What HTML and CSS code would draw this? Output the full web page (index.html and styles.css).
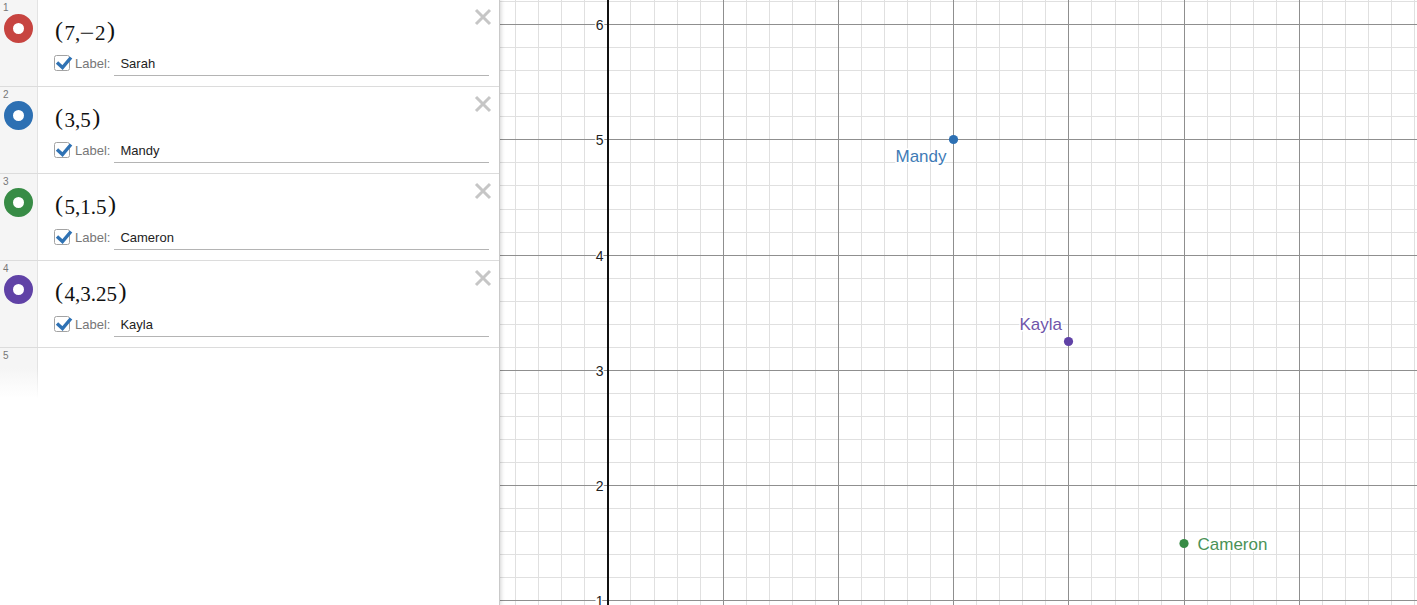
FILE: index.html
```html
<!DOCTYPE html>
<html>
<head>
<meta charset="utf-8">
<title>Graph</title>
<link rel="stylesheet" href="styles.css">
</head>
<body>
<div class="panel">
  <div class="expr">
    <div class="gutter"><span class="num">1</span><span class="dot red"></span></div>
    <div class="body">
      <div class="math"><span class="p l">(</span>7,<span class="m">−</span>2<span class="p r">)</span></div>
      <svg class="close" viewBox="0 0 18 18"><path d="M2 2L16 16M16 2L2 16"/></svg>
      <div class="label-row">
        <svg class="cb" viewBox="0 0 16 16"><rect x="0.5" y="0.5" width="15" height="15" rx="2"/><path d="M3 7.5L8.5 12.5L17 2.5"/></svg>
        <span class="lbl">Label:</span>
        <span class="inp">Sarah</span>
      </div>
    </div>
  </div>
  <div class="expr">
    <div class="gutter"><span class="num">2</span><span class="dot blue"></span></div>
    <div class="body">
      <div class="math"><span class="p l">(</span>3,5<span class="p r">)</span></div>
      <svg class="close" viewBox="0 0 18 18"><path d="M2 2L16 16M16 2L2 16"/></svg>
      <div class="label-row">
        <svg class="cb" viewBox="0 0 16 16"><rect x="0.5" y="0.5" width="15" height="15" rx="2"/><path d="M3 7.5L8.5 12.5L17 2.5"/></svg>
        <span class="lbl">Label:</span>
        <span class="inp">Mandy</span>
      </div>
    </div>
  </div>
  <div class="expr">
    <div class="gutter"><span class="num">3</span><span class="dot green"></span></div>
    <div class="body">
      <div class="math"><span class="p l">(</span>5,1.5<span class="p r">)</span></div>
      <svg class="close" viewBox="0 0 18 18"><path d="M2 2L16 16M16 2L2 16"/></svg>
      <div class="label-row">
        <svg class="cb" viewBox="0 0 16 16"><rect x="0.5" y="0.5" width="15" height="15" rx="2"/><path d="M3 7.5L8.5 12.5L17 2.5"/></svg>
        <span class="lbl">Label:</span>
        <span class="inp">Cameron</span>
      </div>
    </div>
  </div>
  <div class="expr">
    <div class="gutter"><span class="num">4</span><span class="dot purple"></span></div>
    <div class="body">
      <div class="math"><span class="p l">(</span>4,3.25<span class="p r">)</span></div>
      <svg class="close" viewBox="0 0 18 18"><path d="M2 2L16 16M16 2L2 16"/></svg>
      <div class="label-row">
        <svg class="cb" viewBox="0 0 16 16"><rect x="0.5" y="0.5" width="15" height="15" rx="2"/><path d="M3 7.5L8.5 12.5L17 2.5"/></svg>
        <span class="lbl">Label:</span>
        <span class="inp">Kayla</span>
      </div>
    </div>
  </div>
  <div class="expr empty">
    <div class="gutter"><span class="num">5</span></div>
    <div class="body"></div>
  </div>
</div>
<div class="graph">
  <svg class="plane" width="917" height="605" viewBox="500 0 917 605">
    <path class="minor" d="M515.5 0V605M538.5 0V605M561.5 0V605M584.5 0V605M630.5 0V605M654.5 0V605M677.5 0V605M700.5 0V605M746.5 0V605M769.5 0V605M792.5 0V605M815.5 0V605M861.5 0V605M884.5 0V605M907.5 0V605M930.5 0V605M976.5 0V605M999.5 0V605M1022.5 0V605M1045.5 0V605M1091.5 0V605M1115.5 0V605M1138.5 0V605M1161.5 0V605M1207.5 0V605M1230.5 0V605M1253.5 0V605M1276.5 0V605M1322.5 0V605M1345.5 0V605M1368.5 0V605M1391.5 0V605M1414.5 0V605M500 1.5H1417M500 47.5H1417M500 70.5H1417M500 93.5H1417M500 116.5H1417M500 162.5H1417M500 185.5H1417M500 209.5H1417M500 232.5H1417M500 278.5H1417M500 301.5H1417M500 324.5H1417M500 347.5H1417M500 393.5H1417M500 416.5H1417M500 439.5H1417M500 462.5H1417M500 508.5H1417M500 531.5H1417M500 554.5H1417M500 577.5H1417"/>
    <path class="major" d="M723.5 0V605M838.5 0V605M953.5 0V605M1068.5 0V605M1184.5 0V605M1299.5 0V605M500 24.5H1417M500 139.5H1417M500 255.5H1417M500 370.5H1417M500 485.5H1417M500 600.5H1417"/>
    <path class="axis" d="M608 0V605"/>
    <g class="ticks">
      <text x="603.5" y="29.5">6</text>
      <text x="603.5" y="144.5">5</text>
      <text x="603.5" y="260.5">4</text>
      <text x="603.5" y="375.5">3</text>
      <text x="603.5" y="490.5">2</text>
      <text x="603.5" y="605.5">1</text>
    </g>
    <circle class="pt-blue" cx="953.5" cy="139.5" r="4.6"/>
    <circle class="pt-purple" cx="1068.5" cy="341.5" r="4.6"/>
    <circle class="pt-green" cx="1184" cy="543.5" r="4.6"/>
    <text class="plabel lb-blue" x="946.5" y="162" text-anchor="end">Mandy</text>
    <text class="plabel lb-purple" x="1062" y="330" text-anchor="end">Kayla</text>
    <text class="plabel lb-green" x="1197.5" y="549.5">Cameron</text>
  </svg>
</div>
</body>
</html>
```
FILE: styles.css
```css
* { box-sizing: border-box; }
html, body { margin: 0; }
body {
  display: flex;
  height: 605px;
  overflow: hidden;
  background: #fff;
  font-family: "Liberation Sans", Arial, sans-serif;
}
.panel {
  width: 500px;
  flex: none;
  background: #fff;
  border-right: 1px solid #c9c9c9;
  box-shadow: 1px 0 4px rgba(0, 0, 0, 0.18);
  position: relative;
  z-index: 2;
}
.expr {
  display: flex;
  height: 87px;
  border-bottom: 1px solid #dcdcdc;
}
.gutter {
  width: 38px;
  flex: none;
  background: #f5f5f5;
  border-right: 1px solid #e3e3e3;
  padding-top: 2px;
}
.num {
  display: block;
  margin-left: 3px;
  font-size: 10px;
  line-height: 11px;
  color: #777;
}
.dot {
  display: block;
  width: 29px;
  height: 29px;
  margin: 1px 0 0 4px;
  border-radius: 50%;
  border: 9.5px solid;
  background: #fff;
}
.dot.red { border-color: #c74440; }
.dot.blue { border-color: #2d70b3; }
.dot.green { border-color: #388c46; }
.dot.purple { border-color: #6042a6; }
.body {
  flex: 1;
  display: grid;
  grid-template-columns: 1fr 20px;
  grid-template-rows: 26px auto;
  align-content: start;
  padding: 17px 10px 0 17px;
}
.math {
  font-family: "Liberation Serif", "Times New Roman", serif;
  font-size: 21px;
  line-height: 26px;
  height: 26px;
  color: #111;
  white-space: nowrap;
}
.p { font-size: 24px; vertical-align: 2px; }
.p.l { margin-right: 1.5px; }
.p.r { margin-left: 1.5px; }
.m {
  display: inline-block;
  margin: 0 2px 0 1px;
  transform: scaleX(1.25);
}
.close {
  display: block;
  width: 18px;
  height: 18px;
  justify-self: end;
  align-self: start;
  margin: -9px -3px 0 0;
}
.close path { stroke: #c6c6c6; stroke-width: 3; fill: none; }
.label-row {
  grid-column: 1 / -1;
  display: flex;
  align-items: flex-start;
  margin-top: 12px;
}
.cb {
  width: 16px;
  height: 16px;
  flex: none;
  margin-left: -1px;
  overflow: visible;
}
.cb rect { fill: #fff; stroke: #a3a3a3; stroke-width: 1; }
.cb path { fill: none; stroke: #2f72b4; stroke-width: 3.4; }
.lbl {
  margin: 1px 0 0 5px;
  font-size: 13px;
  line-height: 16px;
  color: #777;
}
.inp {
  flex: 1;
  margin-left: 4px;
  height: 21px;
  padding: 1px 0 0 6px;
  font-size: 13px;
  line-height: 16px;
  color: #222;
  border-bottom: 1px solid #b4b4b4;
}
.expr.empty {
  height: 50px;
  border-bottom: none;
}
.expr.empty .gutter {
  background: linear-gradient(#f5f5f5 40%, #fff 100%);
  border-right: 1px solid;
  border-image: linear-gradient(#e3e3e3 40%, #fff 100%) 1;
}
.graph {
  flex: 1;
  min-width: 0;
}
.plane { display: block; }
.minor { stroke: #e0e0e0; stroke-width: 1; fill: none; }
.major { stroke: #8f8f8f; stroke-width: 1; fill: none; }
.axis { stroke: #111; stroke-width: 2; fill: none; }
.ticks text {
  font-family: "Liberation Sans", Arial, sans-serif;
  font-size: 14px;
  fill: #222;
  text-anchor: end;
  stroke: #fff;
  stroke-width: 3;
  paint-order: stroke;
}
.pt-blue { fill: #2d70b3; }
.pt-purple { fill: #6042a6; }
.pt-green { fill: #388c46; }
.plabel {
  font-family: "Liberation Sans", Arial, sans-serif;
  font-size: 17px;
  stroke: #fff;
  stroke-width: 3;
  paint-order: stroke;
}
.lb-blue { fill: #3f7bb6; }
.lb-purple { fill: #6f55aa; }
.lb-green { fill: #4a9257; }
```
